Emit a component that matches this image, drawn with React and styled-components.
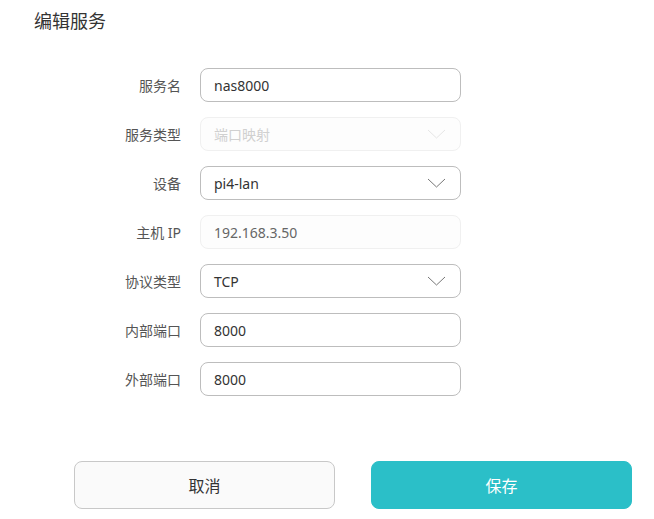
import React from 'react';
import styled, { createGlobalStyle } from 'styled-components';

const GlobalStyle = createGlobalStyle`
  body {
    margin: 0;
    background: #fff;
    font-family: "Noto Sans", "Noto Sans CJK SC", sans-serif;
    color: #333;
  }
`

const Page = styled.div`
  width: 654px;
  height: 519px;
  overflow: hidden;
`
const Title = styled.div`
  padding: 7px 0 0 34px;
  height: 68px;
  box-sizing: border-box;
  font-size: 18px;
  color: #333;
`
const Form = styled.div`
  padding-left: 100px;
  display: flex;
  flex-direction: column;
  gap: 15px;
`
const Row = styled.div`
  display: flex;
  align-items: center;
  height: 34px;
`
const Label = styled.div`
  width: 81px;
  margin-right: 19px;
  text-align: right;
  font-size: 14px;
  color: #555;
`
const Field = styled.div`
  width: 261px;
  height: 34px;
  box-sizing: border-box;
  border-radius: 8px;
  border: 1px solid ${p => (p.disabled ? '#f0f0f0' : '#bdbdbd')};
  background: ${p => (p.disabled ? '#fdfdfd' : '#fff')};
  color: ${p => (p.faded ? '#d0d0d0' : p.disabled ? '#666' : '#333')};
  display: flex;
  align-items: center;
  justify-content: space-between;
  padding: 0 13px;
  font-size: 14px;
`
const Chevron = styled.svg`
  width: 19px;
  height: 10px;
  margin-right: 1px;
`
const Actions = styled.div`
  display: flex;
  gap: 36px;
  padding: 65px 0 0 74px;
`
const Button = styled.button`
  width: 261px;
  height: 48px;
  border-radius: 8px;
  font-family: inherit;
  font-size: 16px;
  border: 1px solid ${p => (p.primary ? '#2bbfc8' : '#c8c8c8')};
  background: ${p => (p.primary ? '#2bbfc8' : '#fafafa')};
  color: ${p => (p.primary ? '#fff' : '#333')};
  cursor: pointer;
`

const ArrowDown = ({ light }) => (
  <Chevron viewBox="0 0 19 10">
    <polyline points="1,1 9.5,9 18,1" fill="none" stroke={light ? '#e6e6e6' : '#777'} strokeWidth="1" />
  </Chevron>
)

const fields = [
  { label: '服务名', value: 'nas8000' },
  { label: '服务类型', value: '端口映射', select: true, disabled: true, faded: true },
  { label: '设备', value: 'pi4-lan', select: true },
  { label: '主机 IP', value: '192.168.3.50', disabled: true },
  { label: '协议类型', value: 'TCP', select: true },
  { label: '内部端口', value: '8000' },
  { label: '外部端口', value: '8000' },
]

export default function App() {
  return (
    <Page>
      <GlobalStyle />
      <Title>编辑服务</Title>
      <Form>
        {fields.map(f => (
          <Row key={f.label}>
            <Label>{f.label}</Label>
            <Field disabled={f.disabled} faded={f.faded}>
              <span>{f.value}</span>
              {f.select && <ArrowDown light={f.disabled} />}
            </Field>
          </Row>
        ))}
      </Form>
      <Actions>
        <Button>取消</Button>
        <Button primary>保存</Button>
      </Actions>
    </Page>
  );
}
